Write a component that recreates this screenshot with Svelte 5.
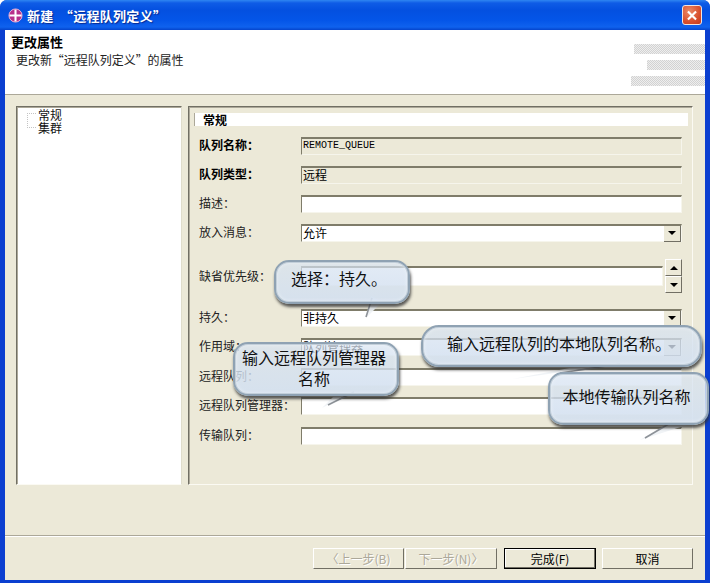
<script lang="ts">
  const rows = [
    { label: '队列名称：', kind: 'readonly', value: 'REMOTE_QUEUE', strong: true, mono: true },
    { label: '队列类型：', kind: 'readonly', value: '远程', strong: true },
    { label: '描述：', kind: 'text', value: '' },
    { label: '放入消息：', kind: 'combo', value: '允许' },
    { label: '缺省优先级：', kind: 'spin', value: '', cls: 'spin-row' },
    { label: '持久：', kind: 'combo', value: '非持久', cls: 'after-spin' },
    { label: '作用域：', kind: 'combo', value: '队列管理器' },
    { label: '远程队列：', kind: 'text', value: '', cls: 'nudge' },
    { label: '远程队列管理器：', kind: 'text', value: '' },
    { label: '传输队列：', kind: 'text', value: '', cls: 'nudge' }
  ];

  const buttons = [
    { text: '〈上一步(B)', cls: 'off' },
    { text: '下一步(N)〉', cls: 'off next' },
    { text: '完成(F)', cls: 'primary' },
    { text: '取消', cls: 'cancel' }
  ];

  const tails = [
    { fill: '371,296 366,318 382,302', line: '372,298 366,317' },
    { fill: '352,392 322,408 338,392', line: '354,392 328,405' },
    { fill: '618,364 513,379 590,364', line: '620,364 560,373' },
    { fill: '672,422 640,440 690,424', line: '672,422 645,438' }
  ];
</script>

<div class="window">
  <div class="titlebar">
    <svg class="app-icon" viewBox="0 0 16 16" width="15" height="15">
      <circle cx="8" cy="8" r="7" fill="#b8308a" stroke="#eeb4d8" />
      <path d="M8 1.5v13M1.5 8h13" stroke="#fff" stroke-width="2.2" />
    </svg>
    <span class="title">新建 “远程队列定义”</span>
    <button class="close" aria-label="关闭">
      <svg viewBox="0 0 20 20" width="19" height="19">
        <path d="M5.5 5.5l9 9M14.5 5.5l-9 9" stroke="#fff" stroke-width="2.4" />
      </svg>
    </button>
  </div>

  <div class="client">
    <header class="banner">
      <div class="banner-text">
        <strong>更改属性</strong>
        <span>更改新 “远程队列定义” 的属性</span>
      </div>
      <div class="dither" aria-hidden="true">
        <i class="d1"></i>
        <i class="d2"></i>
        <i class="d3"></i>
      </div>
    </header>

    <main class="body">
      <nav class="tree">
        <div class="node">常规</div>
        <div class="node">集群</div>
      </nav>
      <section class="panel">
        <div class="section-title">常规</div>
        <div class="form">
          {#each rows as row}
            <div class="row {row.cls ?? ''}">
              <span class="label" class:strong={row.strong}>{row.label}</span>
              <div class="field {row.kind}" class:mono={row.mono}>
                <span>{row.value}</span>
                {#if row.kind === 'combo'}
                  <b class="drop"><i class="arrow down"></i></b>
                {/if}
              </div>
              {#if row.kind === 'spin'}
                <div class="spinner">
                  <b><i class="arrow up"></i></b>
                  <b><i class="arrow down"></i></b>
                </div>
              {/if}
            </div>
          {/each}
        </div>
      </section>
    </main>

    <footer class="footer">
      {#each buttons as btn}
        <button class="btn {btn.cls}">{btn.text}</button>
      {/each}
    </footer>
  </div>

  <svg class="tails" viewBox="0 0 710 583" width="710" height="583" aria-hidden="true">
    {#each tails as t}
      <polygon points={t.fill} fill="#eef2f5" fill-opacity="0.9" />
      <polyline points={t.line} fill="none" stroke="#8d9298" stroke-width="1.6" />
    {/each}
  </svg>
  <div class="bubble b1">选择：持久。</div>
  <div class="bubble b2">输入远程队列管理器<br />名称</div>
  <div class="bubble b3">输入远程队列的本地队列名称。</div>
  <div class="bubble b4">本地传输队列名称</div>
</div>

<style>
  :global(body) {
    margin: 0;
    background: #fff;
  }

  .window {
    position: relative;
    box-sizing: border-box;
    width: 710px;
    height: 583px;
    padding: 0 5px 3px 5px;
    display: flex;
    flex-direction: column;
    background: #0b3fd0;
    border-radius: 7px 7px 0 0;
    font-family: "Noto Sans CJK SC", "Liberation Sans", sans-serif;
    font-size: 12px;
    color: #000;
    overflow: hidden;
  }

  .titlebar {
    height: 30px;
    margin: 0 -5px;
    padding: 0 8px;
    display: flex;
    align-items: center;
    gap: 4px;
    flex: none;
    background: linear-gradient(#2f86f2 0, #0f5ce6 3px, #0450e0 10px, #0455e8 20px, #0f62ee 27px, #0444cc 30px);
  }

  .title {
    color: #fff;
    font-weight: 700;
    font-size: 13px;
    letter-spacing: 0.3px;
    word-spacing: 3px;
    text-shadow: 1px 1px 1px #0a2a90;
  }

  .close {
    margin-left: auto;
    width: 20px;
    height: 20px;
    padding: 0;
    display: flex;
    align-items: center;
    justify-content: center;
    border: 1px solid #f0e4e0;
    border-radius: 3px;
    background: radial-gradient(circle at 35% 30%, #ea8a68, #d8502e 60%, #c23a1e);
  }

  .client {
    flex: 1;
    display: flex;
    flex-direction: column;
    background: #ece9d8;
    min-height: 0;
  }

  .banner {
    height: 65px;
    flex: none;
    box-sizing: border-box;
    position: relative;
    background: #fff;
    border-bottom: 1px solid #aca899;
  }

  .banner-text {
    padding: 4px 0 0 6px;
    display: flex;
    flex-direction: column;
    line-height: 16px;
  }

  .banner-text strong {
    font-size: 13px;
  }

  .banner-text span {
    padding-left: 5px;
    font-size: 12px;
    margin-top: 2px;
    word-spacing: -3px;
    color: #222;
  }

  .dither {
    position: absolute;
    right: 0;
    top: 14px;
    display: flex;
    flex-direction: column;
    align-items: flex-end;
    gap: 6px;
  }

  .dither i {
    display: block;
    height: 10px;
    background: repeating-conic-gradient(#d2d2d2 0 25%, #eeeeee 0 50%) 0 0 / 2px 2px;
  }

  .d1 { width: 71px; }
  .d2 { width: 58px; }
  .d3 { width: 74px; }

  .body {
    box-sizing: border-box;
    height: 440px;
    flex: none;
    padding: 11px 12px 50px 11px;
    display: flex;
    gap: 6px;
  }

  .tree,
  .panel {
    box-sizing: border-box;
    border: 1px solid;
    border-color: #716f64 #fbfaf3 #fbfaf3 #716f64;
    box-shadow: inset 1px 1px 0 #aca899;
  }

  .tree {
    width: 166px;
    background-color: #fff;
    padding: 1px 0 0 21px;
    border-right-color: #e0ddcc;
    background-image:
      repeating-linear-gradient(#c4c4c4 0 1px, transparent 1px 2px),
      repeating-linear-gradient(90deg, #c4c4c4 0 1px, transparent 1px 2px),
      repeating-linear-gradient(90deg, #c4c4c4 0 1px, transparent 1px 2px);
    background-repeat: no-repeat;
    background-size: 1px 15px, 10px 1px, 10px 1px;
    background-position: 10px 6px, 10px 6px, 10px 20px;
  }

  .node {
    line-height: 13px;
    height: 13px;
    color: #111;
  }

  .panel {
    flex: 1;
    padding: 6px 4px 0 5px;
  }

  .section-title {
    height: 13px;
    line-height: 13px;
    background: #fff;
    border-left: 1px solid #aca899;
    padding-left: 8px;
    font-weight: 700;
  }

  .form {
    margin-top: 11px;
    display: flex;
    flex-direction: column;
    gap: 11px;
    padding-left: 5px;
  }

  .row {
    display: flex;
    align-items: flex-start;
    height: 18px;
  }

  .spin-row {
    height: 34px;
    margin-top: 6px;
    align-items: center;
  }

  .after-spin {
    margin-top: 5px;
  }

  .nudge {
    margin-top: 1px;
  }

  .label {
    width: 102px;
    flex: none;
    line-height: 16px;
    color: #222;
    white-space: nowrap;
  }

  .label.strong {
    font-weight: 700;
    color: #000;
  }

  .field {
    box-sizing: border-box;
    width: 381px;
    height: 18px;
    display: flex;
    align-items: center;
    justify-content: space-between;
    line-height: 14px;
    background: #fff;
    border: 1px solid;
    border-color: #7f7c6a #f6f5ec #f6f5ec #7f7c6a;
    border-top-width: 2px;
  }

  .field > span {
    padding: 0 0 2px 1px;
  }

  .field.readonly {
    background: #ece9d8;
  }

  .field.mono {
    font-family: "Liberation Mono", monospace;
    font-size: 10px;
  }

  .field.spin {
    width: 362px;
    height: 20px;
  }

  .drop {
    width: 16px;
    height: 15px;
    flex: none;
    display: flex;
    align-items: center;
    justify-content: center;
    background: #ece9d8;
    border-right: 1px solid #716f64;
    border-bottom: 1px solid #716f64;
  }

  .spinner {
    width: 17px;
    margin-left: 2px;
    display: flex;
    flex-direction: column;
  }

  .spinner b {
    height: 17px;
    box-sizing: border-box;
    display: flex;
    align-items: center;
    justify-content: center;
    background: #ece9d8;
    border: 1px solid;
    border-color: #fff #716f64 #716f64 #fff;
  }

  .arrow {
    display: block;
    width: 0;
    height: 0;
    border-left: 4px solid transparent;
    border-right: 4px solid transparent;
  }

  .arrow.down {
    border-top: 4px solid #000;
  }

  .arrow.up {
    border-bottom: 4px solid #000;
  }

  .footer {
    flex: 1;
    border-top: 1px solid #aca899;
    box-shadow: inset 0 1px 0 #fff;
    padding: 12px 12px 0 0;
    display: flex;
    justify-content: flex-end;
    align-items: flex-start;
  }

  .btn {
    box-sizing: border-box;
    width: 91px;
    height: 21px;
    padding: 0;
    font: inherit;
    line-height: 17px;
    background: #ece9d8;
    border: 1px solid;
    border-color: #fff #716f64 #716f64 #fff;
    color: #000;
  }

  .btn.off {
    color: #aca899;
    text-shadow: 1px 1px 0 #fff;
  }

  .btn.next {
    margin-left: 1px;
    width: 92px;
  }

  .btn.primary {
    margin-left: 7px;
    width: 92px;
    border: 1px solid #000;
    box-shadow: inset -1px -1px 0 #716f64, inset 1px 1px 0 #fff;
  }

  .btn.cancel {
    margin-left: 6px;
  }

  .tails {
    position: absolute;
    left: 0;
    top: 0;
    pointer-events: none;
  }

  .bubble {
    position: absolute;
    box-sizing: border-box;
    display: flex;
    align-items: center;
    justify-content: center;
    text-align: center;
    font-size: 16px;
    line-height: 25px;
    color: #111;
    white-space: nowrap;
    background: linear-gradient(rgba(214, 226, 241, 0.68), rgba(211, 224, 240, 0.9));
    border: 2px solid #8fa2b3;
    border-radius: 15px;
    box-shadow: 1px 3px 3px rgba(50, 50, 50, 0.8), inset 0 0 0 1px #c3cfda, inset 0 0 4px #f2f6fa;
  }

  .b1 { left: 274px; top: 260px; width: 136px; height: 44px; justify-content: flex-start; padding: 0 0 8px 15px; }
  .b2 { left: 233px; top: 342px; width: 166px; height: 54px; padding: 0 4px 3px 0; line-height: 21px; }
  .b3 { left: 421px; top: 325px; width: 281px; height: 42px; padding: 0 0 5px 24px; justify-content: flex-start; border-radius: 18px; }
  .b4 { left: 548px; top: 372px; width: 161px; height: 53px; padding: 0 4px 5px 0; }
</style>
